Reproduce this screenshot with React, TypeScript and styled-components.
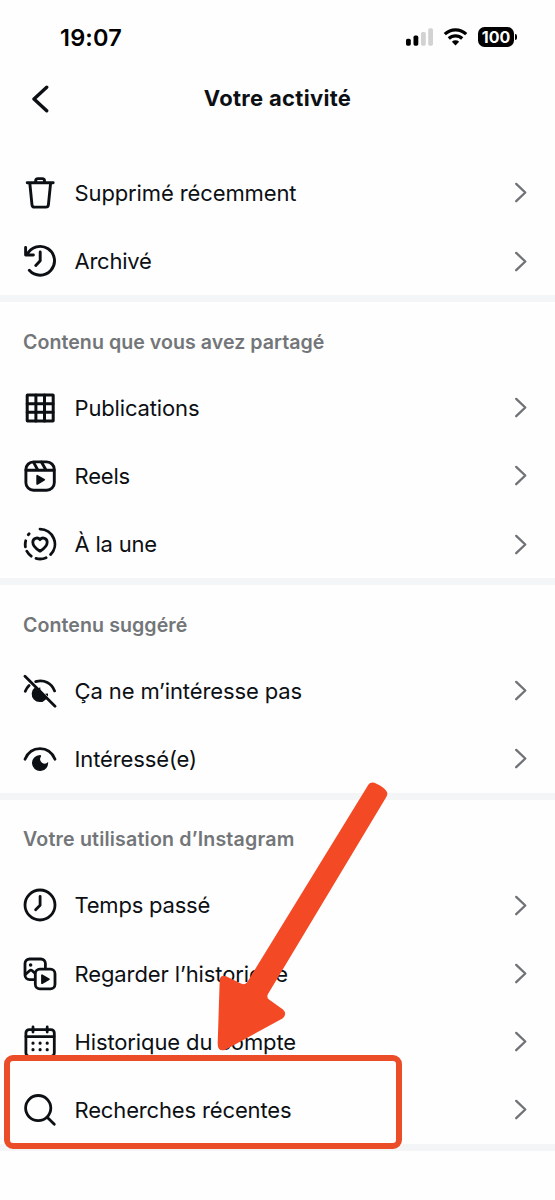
import React from 'react';
import styled, { createGlobalStyle } from 'styled-components';

const GlobalStyle = createGlobalStyle`
  * {
    box-sizing: border-box;
  }

  body {
    margin: 0;
    background: #fefefe;
    color: #0c1014;
    font-family: Inter, 'Liberation Sans', sans-serif;
  }
`;

const Screen = styled.div`
  position: relative;
  width: 555px;
  height: 1200px;
  overflow: hidden;
`;

const StatusBar = styled.div`
  display: flex;
  align-items: center;
  justify-content: space-between;
  height: 74px;
  padding: 0 41px 0 60px;
`;

const Time = styled.span`
  font-size: 23.5px;
  font-weight: 600;
  letter-spacing: 0.2px;
  color: #000;
`;

const StatusIcons = styled.div`
  display: flex;
  align-items: center;
  gap: 10px;
`;

const Battery = styled.div`
  position: relative;
  width: 36px;
  height: 20px;
  border-radius: 6.5px;
  background: #000;
  color: #fff;
  font-size: 16px;
  font-weight: 700;
  line-height: 20px;
  text-align: center;

  &::after {
    content: '';
    position: absolute;
    top: 7px;
    right: -3px;
    width: 2px;
    height: 6px;
    border-radius: 0 2px 2px 0;
    background: #000;
  }
`;

const Header = styled.header`
  display: grid;
  grid-template-columns: 80px 1fr 80px;
  align-items: center;
  height: 49px;
  margin-bottom: 35.8px;
`;

const BackButton = styled.button`
  display: flex;
  padding: 0 0 0 30px;
  border: 0;
  background: none;
  color: #0c1014;
`;

const Title = styled.h1`
  margin: 0;
  padding-bottom: 2px;
  font-size: 22px;
  font-weight: 650;
  letter-spacing: 0.3px;
  text-align: center;
`;

const Section = styled.section`
  border-bottom: 7px solid #f3f5f7;
`;

const SectionTitle = styled.h2<{ $tracking: number }>`
  display: flex;
  align-items: center;
  height: 71.4px;
  margin: 0;
  padding: 9px 23px 0;
  font-size: 19.6px;
  font-weight: 600;
  line-height: 1;
  letter-spacing: ${({ $tracking }) => $tracking}px;
  color: #737679;
`;

const Row = styled.div`
  display: flex;
  align-items: center;
  height: 68.2px;
  padding: 0 28px 0 23px;
`;

const Label = styled.span<{ $tracking: number }>`
  flex: 1;
  margin-left: 17.5px;
  font-size: 22px;
  letter-spacing: ${({ $tracking }) => $tracking}px;
  white-space: nowrap;
`;

const Icon = styled.svg`
  width: 34px;
  height: 34px;
  fill: none;
  stroke: currentColor;
  stroke-linecap: round;
  stroke-linejoin: round;
`;

const Highlight = styled.div`
  position: absolute;
  left: 4px;
  top: 1055px;
  width: 398px;
  height: 94px;
  border: 6px solid #eb4d29;
  border-radius: 9px;
`;

const Arrow = styled.svg`
  position: absolute;
  left: 210px;
  top: 775px;
`;

const TrashIcon = () => (
  <Icon viewBox="0 0 34 34">
    <g strokeWidth="2.9">
      <path d="M4.200 6.800h26M6.800 7.200l2.200 21.600a2.600 2.600 0 0 0 2.600 2.300h11.200a2.600 2.600 0 0 0 2.600-2.300l2.200-21.600M12.700 6.600V4.800a2.200 2.200 0 0 1 2.200-2.200h4.400a2.200 2.200 0 0 1 2.200 2.200v1.800" />
    </g>
  </Icon>
);

const ArchiveIcon = () => (
  <Icon viewBox="0 0 34 34">
    <g strokeWidth="2.9">
      <path d="M4.2 10.4A14.4 14.4 0 1 1 6.3 26.3" />
      <path d="M2.6 3.4v7.6h7.8M17.2 8v8.8l-4.4 4.6" />
    </g>
  </Icon>
);

const GridIcon = () => (
  <Icon viewBox="0 0 34 34">
    <g strokeWidth="3">
      <rect x="4.2" y="4" width="26" height="26" rx="0.3" />
      <path d="M12.9 4V30M21.5 4V30M4.2 12.7H30M4.2 21.3H30" />
    </g>
  </Icon>
);

const ReelsIcon = () => (
  <Icon viewBox="0 0 34 34">
    <g strokeWidth="2.9">
      <rect x="2.9" y="2.9" width="28.4" height="28.4" rx="7.6" />
      <path d="M3 11.2h28M10.6 3.4l4.2 7.6M18.4 3l4.6 8" />
    </g>
    <path d="M14.2 16.7v8.2l7-4.1z" fill="currentColor" strokeWidth="1.8" />
  </Icon>
);

const HighlightIcon = () => (
  <Icon viewBox="0 0 34 34">
    <g strokeWidth="2.8">
      <path d="M17 2.1a15 15 0 0 1 10.6 25.5M23.1 30.7a15 15 0 0 1-10.1.7M8.2 29.2a15 15 0 0 1-4.4-5M2.4 19.8a15 15 0 0 1 .3-6M5.3 7.7l.8-.9" />
      <path d="M17 24.2c-1.3-.8-7.2-4.6-7.2-9a4 4 0 0 1 7.2-2.5 4 4 0 0 1 7.2 2.5c0 4.4-5.9 8.2-7.2 9z" />
    </g>
  </Icon>
);

const NotInterestedIcon = () => (
  <Icon viewBox="0 0 34 34">
    <g strokeWidth="2.8">
      <path d="M2 2.2l30 30M12.7 7.6c8.6-2.5 16 1.7 18.9 9.3M2.3 17.3a15.500 15.500 0 0 1 3.800-5.700" />
    </g>
    <path d="M11.8 13.6A8.1 8.1 0 1 0 22.8 25.400L23.600 24.200z" fill="currentColor" stroke="none" />
    <path d="M15.500 14.200l1.700-.900.300 3zM22 19.800l3-.200v3z" fill="currentColor" stroke="none" />
  </Icon>
);

const InterestedIcon = () => (
  <Icon viewBox="0 0 34 34">
    <path d="M2 17.2C4.9 10.4 10.6 6.7 17 6.7s12.1 3.7 15 10.5" strokeWidth="2.8" />
    <path
      d="M17 12.9a8.1 8.1 0 1 0 8.1 7.2 4.5 4.5 0 0 1-7.1-5.5c.3-.7-.1-1.7-1-1.7z"
      fill="currentColor"
      stroke="none"
    />
  </Icon>
);

const ClockIcon = () => (
  <Icon viewBox="0 0 34 34">
    <g strokeWidth="2.8">
      <circle cx="17" cy="17" r="15" />
      <path d="M17.1 8.3v8.9l-4.5 4.6" />
    </g>
  </Icon>
);

const WatchIcon = () => (
  <Icon viewBox="0 0 34 34">
    <g strokeWidth="2.8">
      <path d="M11.4 22.7H6.6A4.6 4.6 0 0 1 2 18.1V6.6A4.6 4.6 0 0 1 6.6 2h11.2a4.6 4.6 0 0 1 4.6 4.6v4.3" />
      <path d="M2.6 17.2l4-3.5a2 2 0 0 1 2.6 0l2.5 2.2" />
      <rect x="12.3" y="12.1" width="19.7" height="19.7" rx="4.6" />
    </g>
    <circle cx="7.6" cy="8" r="1.8" fill="currentColor" stroke="none" />
    <path d="M19 18.2v8l6.9-4z" fill="currentColor" strokeWidth="1.8" />
  </Icon>
);

const CalendarIcon = () => (
  <Icon viewBox="0 0 34 34">
    <g strokeWidth="2.8">
      <rect x="2.9" y="4.6" width="28.4" height="26.8" rx="3.4" />
      <path d="M3 11.6h28M10 2v5M24.2 2v5" />
    </g>
    <path
      d="M10 18.2h.01M17.1 18.2h.01M24.2 18.2h.01M10 24.7h.01M17.1 24.7h.01M24.2 24.7h.01"
      strokeWidth="3.2"
    />
  </Icon>
);

const SearchIcon = () => (
  <Icon viewBox="0 0 34 34">
    <g strokeWidth="2.8">
      <circle cx="15.2" cy="15.1" r="12.6" />
      <path d="M24.2 24.2l7.1 7" />
    </g>
  </Icon>
);

const Chevron = () => (
  <svg width="13" height="21" viewBox="0 0 13 21" fill="none">
    <path
      d="M2.2 1.9l9.1 8.6-9.1 8.7"
      stroke="#6f7276"
      strokeWidth="2.3"
      strokeLinecap="round"
      strokeLinejoin="round"
    />
  </svg>
);

interface Item {
  label: string;
  tracking: number;
  icon: React.FC;
}

interface Group {
  title?: string;
  tracking?: number;
  items: Item[];
}

const groups: Group[] = [
  {
    items: [
      { label: 'Supprimé récemment', tracking: -0.12, icon: TrashIcon },
      { label: 'Archivé', tracking: -0.25, icon: ArchiveIcon },
    ],
  },
  {
    title: 'Contenu que vous avez partagé',
    tracking: 0.04,
    items: [
      { label: 'Publications', tracking: -0.15, icon: GridIcon },
      { label: 'Reels', tracking: -0.2, icon: ReelsIcon },
      { label: 'À la une', tracking: -0.22, icon: HighlightIcon },
    ],
  },
  {
    title: 'Contenu suggéré',
    tracking: 0.07,
    items: [
      { label: 'Ça ne m’intéresse pas', tracking: -0.12, icon: NotInterestedIcon },
      { label: 'Intéressé(e)', tracking: -0.12, icon: InterestedIcon },
    ],
  },
  {
    title: 'Votre utilisation d’Instagram',
    tracking: 0.18,
    items: [
      { label: 'Temps passé', tracking: -0.22, icon: ClockIcon },
      { label: 'Regarder l’historique', tracking: -0.1, icon: WatchIcon },
      { label: 'Historique du compte', tracking: -0.12, icon: CalendarIcon },
      { label: 'Recherches récentes', tracking: -0.15, icon: SearchIcon },
    ],
  },
];

const App: React.FC = () => {
  return (
    <Screen>
      <GlobalStyle />
      <StatusBar>
        <Time>19:07</Time>
        <StatusIcons>
          <svg width="29" height="20" viewBox="0 0 29 20">
            <rect x="2" y="11.7" width="4.8" height="7" rx="1.6" />
            <rect x="9.5" y="8.6" width="4.8" height="10.1" rx="1.6" />
            <rect x="17" y="5" width="4.8" height="13.7" rx="1.6" fill="#d2d2d2" />
            <rect x="24.2" y="1.3" width="4.8" height="17.4" rx="1.6" fill="#d2d2d2" />
          </svg>
          <svg width="25" height="20" viewBox="0 0 25 20" fill="none" stroke="#000" strokeWidth="3.2">
            <path d="M1.8 7.2a15.5 15.5 0 0 1 21.4 0M5.8 11.5a9.7 9.7 0 0 1 13.4 0" />
            <path d="M8.9 14.7a5.2 5.2 0 0 1 7.2 0L12.5 18.4z" fill="#000" stroke="none" />
          </svg>
          <Battery>100</Battery>
        </StatusIcons>
      </StatusBar>
      <Header>
        <BackButton aria-label="Retour">
          <svg width="20" height="28" viewBox="0 0 20 28" fill="none">
            <path
              d="M16.7 2.2L4 14l12.7 11.8"
              stroke="currentColor"
              strokeWidth="3.4"
              strokeLinecap="round"
              strokeLinejoin="round"
            />
          </svg>
        </BackButton>
        <Title>Votre activité</Title>
      </Header>
      {groups.map((group, index) => (
        <Section key={index}>
          {group.title && <SectionTitle $tracking={group.tracking ?? 0}>{group.title}</SectionTitle>}
          {group.items.map(({ label, tracking, icon: ItemIcon }) => (
            <Row key={label}>
              <ItemIcon />
              <Label $tracking={tracking}>{label}</Label>
              <Chevron />
            </Row>
          ))}
        </Section>
      ))}
      <Highlight />
      <Arrow width="190" height="285" viewBox="210 775 190 285">
        <path
          d="M368.5 784.5Q371 781 377 784Q383.5 787 386.3 791Q388.5 793.5 386 797.5L268 994Q266.3 997.5 269 999.5L283 1009.5Q287.5 1014 282.5 1018.5L225 1050Q217.5 1052 217.7 1043L219.7 980Q220.5 974.5 226 976.3L241 983.5Q244.5 985.5 247 982.5Z"
          fill="#f44925"
        />
      </Arrow>
    </Screen>
  );
};

export default App;
